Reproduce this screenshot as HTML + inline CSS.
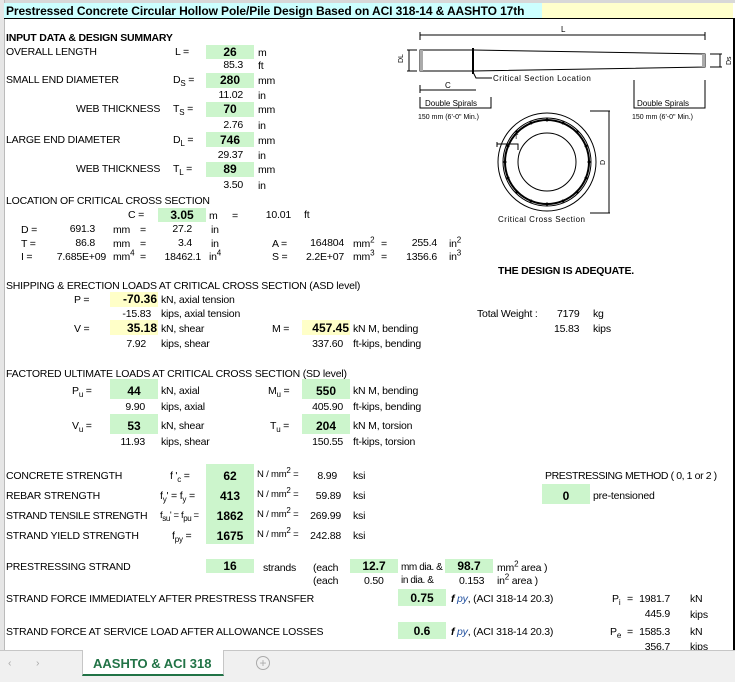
<!DOCTYPE html>
<html><head><meta charset="utf-8"><style>
body{margin:0;width:735px;height:681px;position:relative;overflow:hidden;background:#fff;font-family:"Liberation Sans",Arial,sans-serif;}
.t{position:absolute;font-size:10.5px;line-height:12px;white-space:nowrap;color:#000;letter-spacing:-0.2px}
.b{font-weight:bold}
.g{position:absolute;background:#ccf5cc}
.y{position:absolute;background:#ffffc8}
.bx{position:absolute;font-size:12px;font-weight:bold;text-align:center;line-height:14px}
sub,sup{font-size:8px;line-height:0}
.r{text-align:right}
</style></head><body>
<div style="position:absolute;left:0;top:0;width:735px;height:3px;background:#d8d8d8"></div>
<div style="position:absolute;left:0;top:0;width:4px;height:650px;background:#e6e6e6;border-right:1px solid #bbb"></div>
<div style="position:absolute;left:4px;top:3px;width:538px;height:15px;background:#ccffff;border-bottom:1px solid #000"></div>
<div style="position:absolute;left:542px;top:3px;width:191px;height:15px;background:#ffffcc;border-bottom:1px solid #000"></div>
<div style="position:absolute;left:733px;top:18px;width:2px;height:632px;background:#000"></div>
<div class="t b" style="left:6px;top:4px;font-size:12px;line-height:14px;letter-spacing:-0.1px">Prestressed Concrete Circular Hollow Pole/Pile Design Based on ACI 318-14 &amp; AASHTO 17th</div>

<div class="t b" style="left:6px;top:32px">INPUT DATA &amp; DESIGN SUMMARY</div>
<div class="t" style="left:6px;top:46px">OVERALL LENGTH</div>
<div class="t" style="left:175px;top:46px">L =</div>
<div class="g" style="left:206px;top:45px;width:48px;height:14px"></div><div class="bx" style="left:206px;top:45px;width:48px">26</div>
<div class="t" style="left:258px;top:47px">m</div>
<div class="t r" style="right:492px;top:59px">85.3</div><div class="t" style="left:258px;top:60px">ft</div>

<div class="t" style="left:6px;top:74px">SMALL END DIAMETER</div>
<div class="t" style="left:173px;top:74px">D<sub>S</sub> =</div>
<div class="g" style="left:206px;top:73px;width:48px;height:15px"></div><div class="bx" style="left:206px;top:73px;width:48px">280</div>
<div class="t" style="left:258px;top:75px">mm</div>
<div class="t r" style="right:492px;top:89px">11.02</div><div class="t" style="left:258px;top:90px">in</div>

<div class="t" style="left:76px;top:103px">WEB THICKNESS</div>
<div class="t" style="left:173px;top:103px">T<sub>S</sub> =</div>
<div class="g" style="left:206px;top:102px;width:48px;height:15px"></div><div class="bx" style="left:206px;top:102px;width:48px">70</div>
<div class="t" style="left:258px;top:104px">mm</div>
<div class="t r" style="right:492px;top:119px">2.76</div><div class="t" style="left:258px;top:120px">in</div>

<div class="t" style="left:6px;top:134px">LARGE END DIAMETER</div>
<div class="t" style="left:173px;top:134px">D<sub>L</sub> =</div>
<div class="g" style="left:206px;top:132px;width:48px;height:15px"></div><div class="bx" style="left:206px;top:133px;width:48px">746</div>
<div class="t" style="left:258px;top:135px">mm</div>
<div class="t r" style="right:492px;top:149px">29.37</div><div class="t" style="left:258px;top:150px">in</div>

<div class="t" style="left:76px;top:163px">WEB THICKNESS</div>
<div class="t" style="left:173px;top:163px">T<sub>L</sub> =</div>
<div class="g" style="left:206px;top:162px;width:48px;height:15px"></div><div class="bx" style="left:206px;top:162px;width:48px">89</div>
<div class="t" style="left:258px;top:164px">mm</div>
<div class="t r" style="right:492px;top:179px">3.50</div><div class="t" style="left:258px;top:180px">in</div>

<div class="t" style="left:6px;top:195px">LOCATION OF CRITICAL CROSS SECTION</div>
<div class="t" style="left:128px;top:209px">C =</div>
<div class="g" style="left:158px;top:208px;width:48px;height:14px"></div><div class="bx" style="left:158px;top:208px;width:48px">3.05</div>
<div class="t" style="left:209px;top:210px">m</div><div class="t" style="left:232px;top:210px">=</div>
<div class="t r" style="right:444px;top:209px">10.01</div><div class="t" style="left:304px;top:209px">ft</div>

<div class="t" style="left:21px;top:224px">D =</div><div class="t r" style="right:640px;top:223px">691.3</div><div class="t" style="left:113px;top:224px">mm</div><div class="t" style="left:140px;top:224px">=</div><div class="t r" style="right:543px;top:223px">27.2</div><div class="t" style="left:211px;top:224px">in</div>
<div class="t" style="left:21px;top:238px">T =</div><div class="t r" style="right:640px;top:237px">86.8</div><div class="t" style="left:113px;top:238px">mm</div><div class="t" style="left:140px;top:238px">=</div><div class="t r" style="right:543px;top:237px">3.4</div><div class="t" style="left:211px;top:238px">in</div>
<div class="t" style="left:21px;top:251px">I =</div><div class="t r" style="right:629px;top:251px">7.685E+09</div><div class="t" style="left:113px;top:251px">mm<sup>4</sup></div><div class="t" style="left:140px;top:251px">=</div><div class="t r" style="right:534px;top:251px">18462.1</div><div class="t" style="left:209px;top:251px">in<sup>4</sup></div>
<div class="t" style="left:272px;top:238px">A =</div><div class="t r" style="right:391px;top:237px">164804</div><div class="t" style="left:353px;top:238px">mm<sup>2</sup></div><div class="t" style="left:381px;top:238px">=</div><div class="t r" style="right:298px;top:237px">255.4</div><div class="t" style="left:449px;top:238px">in<sup>2</sup></div>
<div class="t" style="left:272px;top:251px">S =</div><div class="t r" style="right:391px;top:251px">2.2E+07</div><div class="t" style="left:353px;top:251px">mm<sup>3</sup></div><div class="t" style="left:381px;top:251px">=</div><div class="t r" style="right:298px;top:251px">1356.6</div><div class="t" style="left:449px;top:251px">in<sup>3</sup></div>

<div class="t b" style="left:498px;top:265px">THE DESIGN IS ADEQUATE.</div>

<div class="t" style="left:6px;top:280px">SHIPPING &amp; ERECTION LOADS AT CRITICAL CROSS SECTION (ASD level)</div>
<div class="t" style="left:74px;top:294px">P =</div>
<div class="y" style="left:110px;top:292px;width:48px;height:15px"></div><div class="bx" style="left:110px;top:292px;width:47px;text-align:right">-70.36</div>
<div class="t" style="left:161px;top:294px">kN, axial tension</div>
<div class="t r" style="right:584px;top:308px">-15.83</div><div class="t" style="left:161px;top:308px">kips, axial tension</div>
<div class="t" style="left:74px;top:323px">V =</div>
<div class="y" style="left:110px;top:320px;width:48px;height:15px"></div><div class="bx" style="left:110px;top:321px;width:47px;text-align:right">35.18</div>
<div class="t" style="left:161px;top:323px">kN, shear</div>
<div class="t r" style="right:589px;top:338px">7.92</div><div class="t" style="left:161px;top:338px">kips, shear</div>
<div class="t" style="left:272px;top:323px">M =</div>
<div class="y" style="left:302px;top:320px;width:48px;height:15px"></div><div class="bx" style="left:302px;top:321px;width:47px;text-align:right">457.45</div>
<div class="t" style="left:353px;top:323px">kN M, bending</div>
<div class="t r" style="right:392px;top:338px">337.60</div><div class="t" style="left:353px;top:338px">ft-kips, bending</div>
<div class="t" style="left:477px;top:308px">Total Weight :</div><div class="t" style="left:557px;top:308px">7179</div><div class="t" style="left:593px;top:308px">kg</div>
<div class="t" style="left:554px;top:323px">15.83</div><div class="t" style="left:593px;top:323px">kips</div>

<div class="t" style="left:6px;top:368px">FACTORED ULTIMATE LOADS AT CRITICAL CROSS SECTION (SD level)</div>
<div class="t" style="left:72px;top:385px">P<sub>u</sub> =</div>
<div class="g" style="left:110px;top:379px;width:48px;height:20px"></div><div class="bx" style="left:110px;top:384px;width:48px">44</div>
<div class="t" style="left:161px;top:385px">kN, axial</div>
<div class="t r" style="right:590px;top:401px">9.90</div><div class="t" style="left:161px;top:401px">kips, axial</div>
<div class="t" style="left:72px;top:420px">V<sub>u</sub> =</div>
<div class="g" style="left:110px;top:414px;width:48px;height:20px"></div><div class="bx" style="left:110px;top:419px;width:48px">53</div>
<div class="t" style="left:161px;top:420px">kN, shear</div>
<div class="t r" style="right:590px;top:436px">11.93</div><div class="t" style="left:161px;top:436px">kips, shear</div>
<div class="t" style="left:268px;top:385px">M<sub>u</sub> =</div>
<div class="g" style="left:302px;top:379px;width:48px;height:20px"></div><div class="bx" style="left:302px;top:384px;width:48px">550</div>
<div class="t" style="left:353px;top:385px">kN M, bending</div>
<div class="t r" style="right:392px;top:401px">405.90</div><div class="t" style="left:353px;top:401px">ft-kips, bending</div>
<div class="t" style="left:270px;top:420px">T<sub>u</sub> =</div>
<div class="g" style="left:302px;top:414px;width:48px;height:20px"></div><div class="bx" style="left:302px;top:419px;width:48px">204</div>
<div class="t" style="left:353px;top:420px">kN M, torsion</div>
<div class="t r" style="right:392px;top:436px">150.55</div><div class="t" style="left:353px;top:436px">ft-kips, torsion</div>

<div class="g" style="left:206px;top:464px;width:48px;height:80px"></div>
<div class="t" style="left:6px;top:470px">CONCRETE STRENGTH</div><div class="t" style="left:170px;top:470px">f '<sub>c</sub> =</div><div class="bx" style="left:206px;top:469px;width:48px">62</div><div class="t" style="left:257px;top:469px;font-size:9.5px">N / mm<sup>2</sup> =</div><div class="t r" style="right:398px;top:470px">8.99</div><div class="t" style="left:353px;top:470px">ksi</div>
<div class="t" style="left:6px;top:490px">REBAR STRENGTH</div><div class="t" style="left:160px;top:490px">f<sub>y</sub>' = f<sub>y</sub> =</div><div class="bx" style="left:206px;top:489px;width:48px">413</div><div class="t" style="left:257px;top:489px;font-size:9.5px">N / mm<sup>2</sup> =</div><div class="t r" style="right:394px;top:490px">59.89</div><div class="t" style="left:353px;top:490px">ksi</div>
<div class="t" style="left:6px;top:510px;letter-spacing:-0.4px">STRAND TENSILE STRENGTH</div><div class="t" style="left:160px;top:510px;font-size:9.5px;letter-spacing:-0.4px">f<sub>su</sub>' = f<sub>pu</sub> =</div><div class="bx" style="left:206px;top:509px;width:48px">1862</div><div class="t" style="left:257px;top:509px;font-size:9.5px">N / mm<sup>2</sup> =</div><div class="t r" style="right:394px;top:510px">269.99</div><div class="t" style="left:353px;top:510px">ksi</div>
<div class="t" style="left:6px;top:530px">STRAND YIELD STRENGTH</div><div class="t" style="left:172px;top:530px">f<sub>py</sub> =</div><div class="bx" style="left:206px;top:529px;width:48px">1675</div><div class="t" style="left:257px;top:529px;font-size:9.5px">N / mm<sup>2</sup> =</div><div class="t r" style="right:394px;top:530px">242.88</div><div class="t" style="left:353px;top:530px">ksi</div>

<div class="t" style="left:545px;top:470px;letter-spacing:-0.4px">PRESTRESSING METHOD ( 0, 1 or 2 )</div>
<div class="g" style="left:542px;top:484px;width:48px;height:20px"></div><div class="bx" style="left:542px;top:489px;width:48px">0</div>
<div class="t" style="left:593px;top:490px">pre-tensioned</div>

<div class="t" style="left:6px;top:561px">PRESTRESSING STRAND</div>
<div class="g" style="left:206px;top:559px;width:48px;height:14px"></div><div class="bx" style="left:206px;top:559px;width:48px">16</div>
<div class="t" style="left:263px;top:562px">strands</div><div class="t" style="left:313px;top:562px">(each</div>
<div class="g" style="left:350px;top:559px;width:48px;height:14px"></div><div class="bx" style="left:350px;top:559px;width:48px">12.7</div>
<div class="t" style="left:401px;top:562px;font-size:10px;letter-spacing:-0.4px">mm dia. &amp;</div>
<div class="g" style="left:445px;top:559px;width:48px;height:14px"></div><div class="bx" style="left:445px;top:559px;width:48px">98.7</div>
<div class="t" style="left:497px;top:562px">mm<sup>2</sup> area )</div>
<div class="t" style="left:313px;top:575px">(each</div><div class="t" style="left:364px;top:575px">0.50</div><div class="t" style="left:401px;top:575px;font-size:10px;letter-spacing:-0.4px">in dia. &amp;</div><div class="t" style="left:459px;top:575px">0.153</div><div class="t" style="left:497px;top:575px">in<sup>2</sup> area )</div>

<div class="t" style="left:6px;top:593px">STRAND FORCE IMMEDIATELY AFTER PRESTRESS TRANSFER</div>
<div class="g" style="left:398px;top:589px;width:48px;height:17px"></div><div class="bx" style="left:398px;top:591px;width:48px">0.75</div>
<div class="t" style="left:451px;top:593px"><b><i>f</i></b> <i style="color:#1f4e9e">py</i>, (ACI 318-14 20.3)</div>
<div class="t" style="left:612px;top:593px">P<sub>i</sub></div><div class="t" style="left:627px;top:593px">=</div><div class="t r" style="right:65px;top:593px">1981.7</div><div class="t" style="left:690px;top:593px">kN</div>
<div class="t r" style="right:65px;top:608px">445.9</div><div class="t" style="left:690px;top:609px">kips</div>
<div class="t" style="left:6px;top:626px">STRAND FORCE AT SERVICE LOAD AFTER ALLOWANCE LOSSES</div>
<div class="g" style="left:398px;top:622px;width:48px;height:17px"></div><div class="bx" style="left:398px;top:624px;width:48px">0.6</div>
<div class="t" style="left:451px;top:626px"><b><i>f</i></b> <i style="color:#1f4e9e">py</i>, (ACI 318-14 20.3)</div>
<div class="t" style="left:610px;top:626px">P<sub>e</sub></div><div class="t" style="left:627px;top:626px">=</div><div class="t r" style="right:65px;top:626px">1585.3</div><div class="t" style="left:690px;top:626px">kN</div>
<div class="t r" style="right:65px;top:641px">356.7</div><div class="t" style="left:690px;top:641px">kips</div>

<svg style="position:absolute;left:0;top:0" width="735" height="681" fill="none" stroke="#000" stroke-width="1">
<line x1="420" y1="35" x2="705" y2="35"/><line x1="420" y1="32" x2="420" y2="40"/><line x1="705" y1="32" x2="705" y2="40"/>
<text x="561" y="32" font-size="8" fill="#000" stroke="none" font-family="Liberation Sans">L</text>
<polygon points="420,50 473,50 705,54 705,67 473,71 420,71"/>
<line x1="473" y1="48" x2="473" y2="74" stroke-width="2"/>
<rect x="420" y="50" width="3" height="21" fill="#aaa" stroke="none"/><rect x="702" y="54" width="3" height="13" fill="#aaa" stroke="none"/>
<line x1="407" y1="50" x2="417" y2="50"/><line x1="407" y1="71" x2="417" y2="71"/><line x1="409" y1="50" x2="409" y2="71"/>
<line x1="710" y1="54" x2="722" y2="54"/><line x1="710" y1="67" x2="722" y2="67"/><line x1="720" y1="54" x2="720" y2="67"/>
<text x="403" y="63" font-size="7" fill="#000" stroke="none" transform="rotate(-90 403 63)" font-family="Liberation Sans">DL</text>
<text x="731" y="65" font-size="7" fill="#000" stroke="none" transform="rotate(-90 731 65)" font-family="Liberation Sans">Ds</text>
<polyline points="473,72 476,78 492,78"/>
<text x="493" y="81" font-size="8" fill="#000" stroke="none" font-family="Liberation Sans" letter-spacing="0.5">Critical Section Location</text>
<line x1="420" y1="90" x2="476" y2="90"/><line x1="420" y1="85" x2="420" y2="93"/>
<text x="445" y="88" font-size="8" fill="#000" stroke="none" font-family="Liberation Sans">C</text>
<polyline points="420,97 420,108 491,108 491,97"/>
<text x="425" y="106" font-size="8" fill="#000" stroke="none" font-family="Liberation Sans">Double Spirals</text>
<text x="418" y="119" font-size="7" fill="#000" stroke="none" font-family="Liberation Sans">150 mm (6'-0" Min.)</text>
<polyline points="634,80 634,108 705,108 705,80"/>
<text x="637" y="106" font-size="8" fill="#000" stroke="none" font-family="Liberation Sans">Double Spirals</text>
<text x="632" y="119" font-size="7" fill="#000" stroke="none" font-family="Liberation Sans">150 mm (6'-0" Min.)</text>
<circle cx="547" cy="162" r="49"/><circle cx="547" cy="162" r="44"/><circle cx="547" cy="162" r="42" stroke-width="2"/><circle cx="547" cy="162" r="29"/>
<g fill="#000" stroke="none">
<circle cx="547" cy="120" r="1.5"/><circle cx="563" cy="123" r="1.5"/><circle cx="577" cy="132" r="1.5"/><circle cx="586" cy="146" r="1.5"/><circle cx="589" cy="162" r="1.5"/><circle cx="586" cy="178" r="1.5"/><circle cx="577" cy="192" r="1.5"/><circle cx="563" cy="201" r="1.5"/><circle cx="547" cy="204" r="1.5"/><circle cx="531" cy="201" r="1.5"/><circle cx="517" cy="192" r="1.5"/><circle cx="508" cy="178" r="1.5"/><circle cx="505" cy="162" r="1.5"/><circle cx="508" cy="146" r="1.5"/><circle cx="517" cy="132" r="1.5"/><circle cx="531" cy="123" r="1.5"/>
</g>
<polyline points="497,144 518,144 518,150"/><line x1="497" y1="142" x2="497" y2="147"/>
<text x="514" y="139" font-size="7" fill="#000" stroke="none" font-family="Liberation Sans">T</text>
<line x1="590" y1="111" x2="610" y2="111"/><line x1="590" y1="213" x2="610" y2="213"/><line x1="609" y1="111" x2="609" y2="213"/>
<text x="605" y="165" font-size="7" fill="#000" stroke="none" transform="rotate(-90 605 165)" font-family="Liberation Sans">D</text>
<text x="498" y="222" font-size="8" fill="#000" stroke="none" font-family="Liberation Sans" letter-spacing="0.5">Critical Cross Section</text>
</svg>

<div style="position:absolute;left:0;top:650px;width:735px;height:31px;background:#f0f0f0;border-top:1px solid #c6c6c6"></div>
<div class="t" style="left:8px;top:657px;color:#aaa">&#8249;</div><div class="t" style="left:36px;top:657px;color:#aaa">&#8250;</div>
<div style="position:absolute;left:82px;top:650px;width:140px;height:24px;background:#fff;border-bottom:2px solid #217346;border-left:1px solid #c6c6c6;border-right:1px solid #c6c6c6"></div>
<div class="t b" style="left:93px;top:656px;font-size:13px;line-height:15px;color:#217346;letter-spacing:0">AASHTO &amp; ACI 318</div>
<div style="position:absolute;left:256px;top:656px;width:12px;height:12px;border:1px solid #aaa;border-radius:50%;color:#aaa;font-size:12px;line-height:12px;text-align:center">+</div>
</body></html>
